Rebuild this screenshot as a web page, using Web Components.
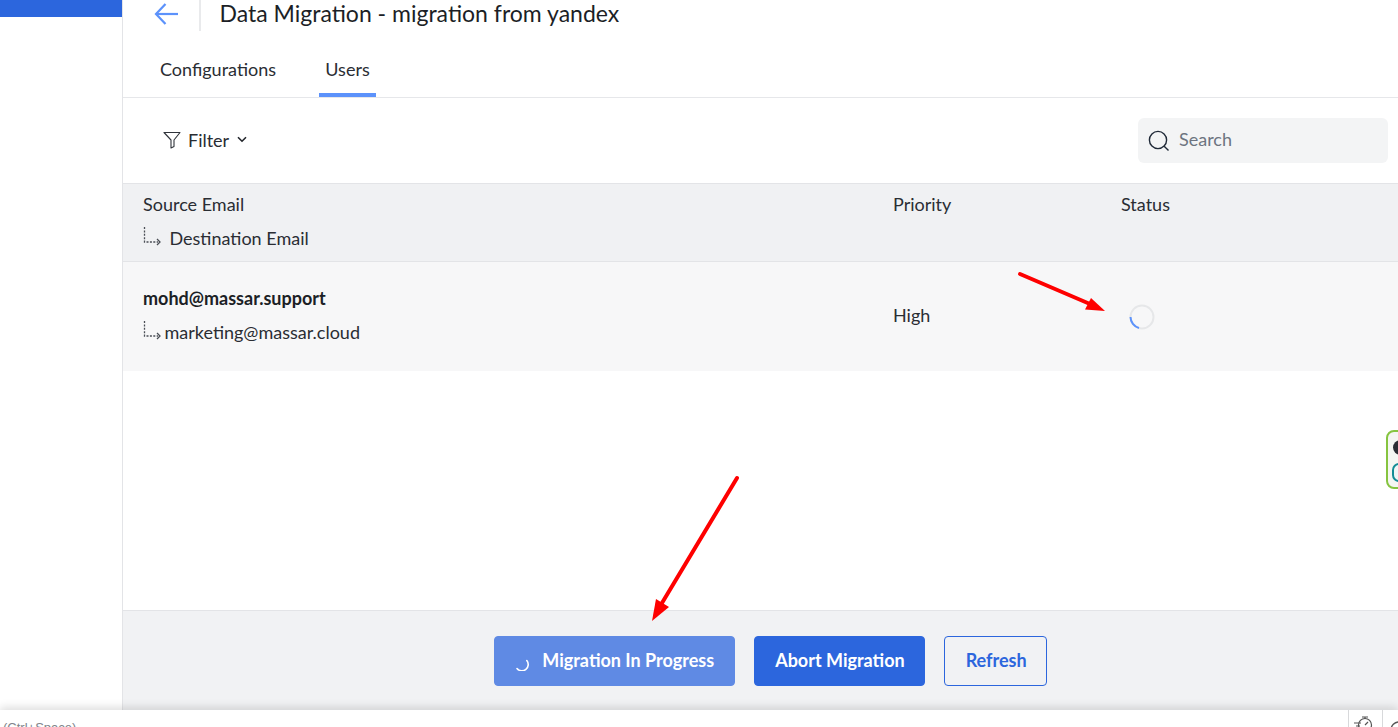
<!DOCTYPE html>
<html><head><meta charset="utf-8">
<style>
html,body{margin:0;padding:0;height:727px;overflow:hidden;background:#fff;font-family:Lato,"Liberation Sans",sans-serif;color:#1c1f26}
</style></head><body>
<mig-app></mig-app>
<script>
function def(name, html){
  customElements.define(name, class extends HTMLElement{
    constructor(){super();this.attachShadow({mode:'open'}).innerHTML=html;}
  });
}
const CORNER='<svg width="18" height="20" viewBox="0 0 18 20" fill="none" stroke="#4a4e55" stroke-width="1.3"><path d="M1.5 1V16H15" stroke-dasharray="2 1.4"/><path d="M14 13L17 16L14 19"/></svg>';

def('mig-header',`<style>
:host{display:block;height:98px;box-sizing:border-box;border-bottom:1px solid #e6e7ea}
.top{display:flex;align-items:center;height:31px;padding-left:31px}
.back{display:block;width:24px;height:24px;margin-top:-3px}
.div{width:2px;height:31px;background:#e9eaec;margin-left:21px}
h1{margin:0 0 0 18.5px;font:400 23px/28px Lato,sans-serif;color:#1c1f26;position:relative;top:-3px}
nav{display:flex;height:66px;padding-left:36px;box-sizing:border-box}
a{display:block;font-size:18px;line-height:22px;padding-top:27px;color:#2a2d33;box-sizing:border-box;height:66px}
a.c{width:160px;padding-left:1px}
a.u{width:57px;text-align:center;border-bottom:4px solid #5c92fb}
</style>
<div class="top">
<svg class="back" viewBox="0 0 24 24" fill="none" stroke="#5c92fb" stroke-width="2.2"><path d="M24 12H2"/><path d="M11.5 2L2 12L11.5 22"/></svg>
<div class="div"></div><h1>Data Migration - migration from yandex</h1></div>
<nav><a class="c">Configurations</a><a class="u">Users</a></nav>`);

def('mig-toolbar',`<style>
:host{display:flex;height:85px;align-items:center;justify-content:space-between;padding:0 10px 0 40px;box-sizing:border-box}
.f{display:flex;align-items:center;font-size:18px;color:#2a2d33;position:relative;top:-1px}
.f svg.fn{margin-right:7px}
.f svg.ch{margin-left:8px}
.s{width:250px;height:45px;border-radius:6px;background:#f3f4f5;display:flex;align-items:center;box-sizing:border-box;padding-left:10px;color:#6d7480;font-size:18px}
.s svg{margin-right:9px}
.s span{position:relative;top:-2px}
</style>
<div class="f">
<svg class="fn" width="18" height="18" viewBox="0 0 18 18" fill="none" stroke="#30343b" stroke-width="1.1"><path d="M1 1.5H17L11 9V15.5L8 17V9Z" stroke-linejoin="round"/></svg>
<span>Filter</span>
<svg class="ch" width="10" height="7" viewBox="0 0 10 7" fill="none" stroke="#22252b" stroke-width="1.6"><path d="M1 1.2L5 5.2L9 1.2"/></svg>
</div>
<div class="s"><svg width="22" height="22" viewBox="0 0 22 22" fill="none" stroke="#1f2937" stroke-width="1.4"><circle cx="10" cy="10" r="8.6"/><path d="M16.2 16.2L20.5 20.5"/></svg><span>Search</span></div>`);

def('mig-cols',`<style>
:host{display:grid;grid-template-columns:750px 228px 1fr;padding-left:20px;box-sizing:border-box;font-size:18px;line-height:22px;color:#2a2d33}
</style><slot></slot>`);

def('mig-table',`<style>
:host{display:block}
.head{background:#f0f1f3;border-top:1px solid #e3e4e7;border-bottom:1px solid #e3e4e7;height:79px;box-sizing:border-box;padding-top:9px}
.row{background:#f7f7f8;height:109px;box-sizing:border-box;padding-top:25px}
.dest{display:flex;align-items:flex-start;margin-top:12px}
.dest span{margin-left:-.5px}
.dest svg{display:block;margin-right:9px;flex:none;margin-top:-1px}
.row .dest svg{margin-right:4px}
b{font-weight:700;color:#1c1f26}
.mid{align-self:start;padding-top:17px}
.st{padding:19px 0 0 8px}
.st svg{display:block;margin-top:-2px}
</style>
<div class="head"><mig-cols>
<div>Source Email<div class="dest">${CORNER}<span>Destination Email</span></div></div>
<div>Priority</div><div>Status</div>
</mig-cols></div>
<div class="row"><mig-cols>
<div><b>mohd@massar.support</b><div class="dest">${CORNER}<span>marketing@massar.cloud</span></div></div>
<div class="mid">High</div>
<div class="st"><svg width="26" height="26" viewBox="0 0 26 26" fill="none" stroke-width="2"><circle cx="13" cy="13" r="11.5" stroke="#e6e7e9"/><path d="M1.5 13A11.5 11.5 0 0 0 10 24" stroke="#5c92fb"/></svg></div>
</mig-cols></div>`);

def('mig-btn',`<style>
:host{display:inline-flex;align-items:center;justify-content:center;height:50px;box-sizing:border-box;border-radius:4px;font:700 18px/22px Lato,sans-serif;background:#2c66dd;color:#fff;border:1px solid #2c66dd;padding:0 19px 2px 20px}
:host([kind=busy]){background:#5f8ae4;border-color:#5f8ae4;padding:0 20px 2px 18px}
:host([kind=line]){background:transparent;color:#2c66dd;padding:0 19px 2px 21px}
</style><slot></slot>`);

def('mig-footer',`<style>
:host{display:flex;height:100px;box-sizing:border-box;background:#f1f2f4;border-top:1px solid #e3e4e7;justify-content:center;align-items:flex-start;padding:25px 0 0 20px;gap:19px}
</style>
<mig-btn kind="busy"><svg width="18" height="18" viewBox="0 0 18 18" fill="none" stroke="#fff" stroke-width="1.6" stroke-linecap="round" style="margin-right:11px;position:relative;top:2px"><path d="M12.8 6.5A6 6 0 0 1 3 14.5" transform="translate(1 1)"/></svg>Migration In Progress</mig-btn>
<mig-btn>Abort Migration</mig-btn>
<mig-btn kind="line">Refresh</mig-btn>`);

def('mig-widget',`<style>
:host{position:absolute;left:1386px;top:430px;width:30px;height:59px;box-sizing:border-box;border:2px solid #86c440;border-radius:8px;background:#f4f6f2}
i{position:absolute;left:5px;display:block;width:15px;height:15px;border-radius:50%}
.a{top:8px;background:#2a2d33}
.b{top:31px;left:4px;width:16px;height:19px;border-radius:7px;box-sizing:border-box;border:2px solid #148c96;background:#eef6f6}
</style><i class="a"></i><i class="b"></i>`);

def('mig-statusbar',`<style>
:host{display:flex;height:17px;box-sizing:border-box;background:#fff;box-shadow:0 -3px 8px rgba(0,0,0,.13);position:relative;font:13px/17px "Liberation Sans",Arial,sans-serif;color:#80848a;overflow:hidden;align-items:flex-start}
.t{flex:1;padding:10px 0 0 3px;line-height:16px;white-space:nowrap}
.c{width:34px;height:17px;border-left:1px solid #d8d9db;box-sizing:border-box;padding:6px 0 0 4px}
.c2{width:16px;padding:11px 0 0 7px}
.c svg{display:block}
</style>
<div class="t">(Ctrl+Space)</div>
<div class="c"><svg width="22" height="18" viewBox="0 0 22 18" fill="none" stroke="#555" stroke-width="1.2"><circle cx="12" cy="9" r="6.5"/><path d="M9 1h6M12 1v2M8 7H1M7 10H3M12 9l3-3"/></svg></div>
<div class="c c2"><svg width="18" height="18" viewBox="0 0 18 18" fill="none" stroke="#555" stroke-width="1.4"><circle cx="9" cy="9" r="8"/></svg></div>`);

def('mig-app',`<style>
:host{display:flex;flex-direction:column;width:1398px;height:727px;overflow:hidden;position:relative}
.body{display:flex;height:710px;flex:none}
aside{width:123px;flex:none;box-sizing:border-box;border-right:1px solid #e3e4e7;background:#fff}
aside div{height:17px;background:#2c66dd}
main{flex:1;display:flex;flex-direction:column;min-width:0}
.sp{flex:1}
svg.ov{position:absolute;left:0;top:0;pointer-events:none}
</style>
<div class="body">
<aside><div></div></aside>
<main><mig-header></mig-header><mig-toolbar></mig-toolbar><mig-table></mig-table><div class="sp"></div><mig-footer></mig-footer></main>
</div>
<mig-statusbar></mig-statusbar>
<mig-widget></mig-widget>
<svg class="ov" width="1398" height="727" fill="#fe0000" stroke="none">
<path d="M1020 274L1090 304" stroke="#fe0000" stroke-width="4" stroke-linecap="round"/>
<path d="M1105 311L1085 309.5L1091 298Z"/>
<path d="M737 478L662 603" stroke="#fe0000" stroke-width="4" stroke-linecap="round"/>
<path d="M652 621L656 599L669 607Z"/>
</svg>`);
</script>
</body></html>
